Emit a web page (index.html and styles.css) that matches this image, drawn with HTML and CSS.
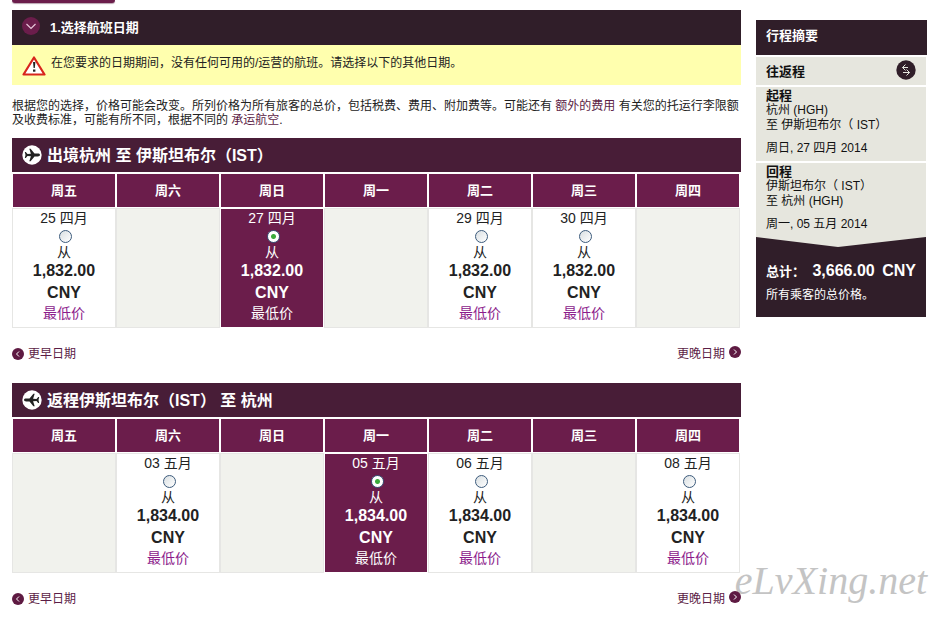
FILE: index.html
```html
<!DOCTYPE html>
<html lang="zh-CN">

<head>
  <meta charset="UTF-8">
  <meta name="viewport" content="width=device-width, initial-scale=1.0">
  <link rel="stylesheet" href="styles.css">
  <title>选择航班日期</title>
</head>

<body>
  <div class="page">
    <main class="main">
      <div class="tab"></div>
      <h1 class="step">
        <svg class="step-icon" width="18" height="18" viewBox="0 0 18 18">
          <circle cx="9" cy="9" r="9" fill="#6b1d4b" />
          <path d="M4.500 7L9 11.500L13.500 7" fill="none" stroke="#e8c6da" stroke-width="1.200" />
        </svg>
        1.选择航班日期
      </h1>
      <div class="notice">
        <svg class="notice-icon" width="24" height="20" viewBox="0 0 24 20">
          <path d="M12 1.500L22.500 18.500H1.500Z" fill="#fff" stroke="#d8251c" stroke-width="2.200" stroke-linejoin="round" />
          <path d="M11 6h2.400l-.6 6h-1.200z" fill="#222" />
          <rect x="11" y="13.500" width="2.400" height="2.200" fill="#222" />
        </svg>
        <span>在您要求的日期期间，没有任何可用的/运营的航班。请选择以下的其他日期。</span>
      </div>
      <p class="info">根据您的选择，价格可能会改变。所列价格为所有旅客的总价，包括税费、费用、附加费等。可能还有 <a href="#">额外的费用</a> 有关您的托运行李限额及收费标准，可能有所不同，根据不同的 <a href="#">承运航空</a>.</p>

      <section class="flight">
        <h2 class="route">
          <svg width="20" height="20" viewBox="0 0 20 20">
            <circle cx="10" cy="10" r="9.700" fill="#fff" />
            <path id="plane" d="M18 10c0-.9-1-1.400-2.200-1.400h-3.300L8.600 3.800H7.300l1.600 4.900-3.400.3L3.800 7H2.800L3.500 10l-.7 3h1L5.500 11l3.400.3-1.600 4.900h1.300l3.900-4.800h3.300c1.200 0 2.200-.5 2.200-1.400z" fill="#222" />
          </svg>
          出境杭州 至 伊斯坦布尔（IST）
        </h2>
        <table class="days">
          <thead>
            <tr>
              <th>周五</th>
              <th>周六</th>
              <th>周日</th>
              <th>周一</th>
              <th>周二</th>
              <th>周三</th>
              <th>周四</th>
            </tr>
          </thead>
          <tbody>
            <tr>
              <td>
                <label class="fare">
                  <span class="date">25 四月</span>
                  <input class="radio" type="radio" name="out">
                  <span class="from">从</span>
                  <span class="price">1,832.00<br>CNY</span>
                  <span class="lowest">最低价</span>
                </label>
              </td>
              <td class="empty"></td>
              <td class="selected">
                <label class="fare">
                  <span class="date">27 四月</span>
                  <input class="radio" type="radio" name="out" checked>
                  <span class="from">从</span>
                  <span class="price">1,832.00<br>CNY</span>
                  <span class="lowest">最低价</span>
                </label>
              </td>
              <td class="empty"></td>
              <td>
                <label class="fare">
                  <span class="date">29 四月</span>
                  <input class="radio" type="radio" name="out">
                  <span class="from">从</span>
                  <span class="price">1,832.00<br>CNY</span>
                  <span class="lowest">最低价</span>
                </label>
              </td>
              <td>
                <label class="fare">
                  <span class="date">30 四月</span>
                  <input class="radio" type="radio" name="out">
                  <span class="from">从</span>
                  <span class="price">1,832.00<br>CNY</span>
                  <span class="lowest">最低价</span>
                </label>
              </td>
              <td class="empty"></td>
            </tr>
          </tbody>
        </table>
        <nav class="pager">
          <a class="earlier" href="#">
            <svg width="12" height="12" viewBox="0 0 12 12">
              <circle cx="6" cy="6" r="6" fill="#5e1a42" />
              <path d="M7 3.500L4.500 6L7 8.500" fill="none" stroke="#fff" />
            </svg>
            更早日期
          </a>
          <a class="later" href="#">
            更晚日期
            <svg width="12" height="12" viewBox="0 0 12 12">
              <circle cx="6" cy="6" r="6" fill="#5e1a42" />
              <path d="M5 3.500L7.500 6L5 8.500" fill="none" stroke="#fff" />
            </svg>
          </a>
        </nav>
      </section>

      <section class="flight">
        <h2 class="route">
          <svg width="20" height="20" viewBox="0 0 20 20">
            <circle cx="10" cy="10" r="9.700" fill="#fff" />
            <use href="#plane" transform="translate(20 0) scale(-1 1)" />
          </svg>
          返程伊斯坦布尔（IST） 至 杭州
        </h2>
        <table class="days">
          <thead>
            <tr>
              <th>周五</th>
              <th>周六</th>
              <th>周日</th>
              <th>周一</th>
              <th>周二</th>
              <th>周三</th>
              <th>周四</th>
            </tr>
          </thead>
          <tbody>
            <tr>
              <td class="empty"></td>
              <td>
                <label class="fare">
                  <span class="date">03 五月</span>
                  <input class="radio" type="radio" name="return">
                  <span class="from">从</span>
                  <span class="price">1,834.00<br>CNY</span>
                  <span class="lowest">最低价</span>
                </label>
              </td>
              <td class="empty"></td>
              <td class="selected">
                <label class="fare">
                  <span class="date">05 五月</span>
                  <input class="radio" type="radio" name="return" checked>
                  <span class="from">从</span>
                  <span class="price">1,834.00<br>CNY</span>
                  <span class="lowest">最低价</span>
                </label>
              </td>
              <td>
                <label class="fare">
                  <span class="date">06 五月</span>
                  <input class="radio" type="radio" name="return">
                  <span class="from">从</span>
                  <span class="price">1,834.00<br>CNY</span>
                  <span class="lowest">最低价</span>
                </label>
              </td>
              <td class="empty"></td>
              <td>
                <label class="fare">
                  <span class="date">08 五月</span>
                  <input class="radio" type="radio" name="return">
                  <span class="from">从</span>
                  <span class="price">1,834.00<br>CNY</span>
                  <span class="lowest">最低价</span>
                </label>
              </td>
            </tr>
          </tbody>
        </table>
        <nav class="pager">
          <a class="earlier" href="#">
            <svg width="12" height="12" viewBox="0 0 12 12">
              <circle cx="6" cy="6" r="6" fill="#5e1a42" />
              <path d="M7 3.500L4.500 6L7 8.500" fill="none" stroke="#fff" />
            </svg>
            更早日期
          </a>
          <a class="later" href="#">
            更晚日期
            <svg width="12" height="12" viewBox="0 0 12 12">
              <circle cx="6" cy="6" r="6" fill="#5e1a42" />
              <path d="M5 3.500L7.500 6L5 8.500" fill="none" stroke="#fff" />
            </svg>
          </a>
        </nav>
      </section>
    </main>

    <aside class="summary">
      <h2 class="summary-title">行程摘要</h2>
      <div class="trip-type">
        往返程
        <svg width="20" height="20" viewBox="0 0 20 20">
          <circle cx="10" cy="10" r="9.700" fill="#301e29" />
          <path d="M9.500 4.500L6.500 7.500L9.500 10.500M6.500 7.500H12M10.500 9.500L13.500 12.500L10.500 15.500M13.500 12.500H7" fill="none" stroke="#e6e6de" />
        </svg>
      </div>
      <div class="leg">
        <h3>起程</h3>
        <p>杭州 (HGH)<br>至 伊斯坦布尔（ IST）</p>
        <p class="leg-date">周日, 27 四月 2014</p>
      </div>
      <div class="leg">
        <h3>回程</h3>
        <p>伊斯坦布尔（ IST）<br>至 杭州 (HGH)</p>
        <p class="leg-date">周一, 05 五月 2014</p>
      </div>
      <div class="total">
        <svg class="arrow" viewBox="0 0 170 10" preserveAspectRatio="none">
          <path d="M0 0H170L82 10Z" fill="#e6e6de" />
        </svg>
        <div class="sum">
          <span>总计：</span>
          <strong>3,666.00</strong>
          <strong>CNY</strong>
        </div>
        <p>所有乘客的总价格。</p>
      </div>
    </aside>
  </div>
  <div class="watermark">eLvXing.net</div>
</body>
</html>
```

FILE: styles.css
```css
body {
  position: relative;
  margin: 0;
  background: #fff;
  color: #222;
  font-family: "Liberation Sans", "Noto Sans CJK SC", sans-serif;
  font-size: 12px;
  line-height: 15px;
}

h1,
h2,
h3,
p {
  margin: 0;
}

a {
  color: #5c1d46;
  text-decoration: none;
}

svg {
  display: block;
  flex: none;
}

.page {
  display: grid;
  grid-template-columns: 1fr 171px;
  gap: 15px;
  align-items: start;
  padding: 0 12px;
}

.tab {
  width: 103px;
  height: 3px;
  border-radius: 0 0 4px 4px;
  background: #6b1d4b;
  box-shadow: 0 1px 1px #b9a3b0;
}

.step {
  display: flex;
  align-items: center;
  gap: 10px;
  height: 35px;
  margin-top: 7px;
  padding: 0 10px;
  background: #301e29;
  color: #fff;
  font-size: 13px;
}

.step-icon {
  margin-bottom: 3px;
}

.notice {
  display: flex;
  align-items: center;
  gap: 5px;
  height: 40px;
  padding: 0 10px;
  background: #ffffae;
}

.notice span {
  margin-bottom: 4px;
}

.notice-icon {
  margin-top: 2px;
}

.info {
  margin: 14px 0 11px;
  line-height: 14px;
}

/* 航班日期表 */
.route {
  display: flex;
  align-items: center;
  gap: 5px;
  height: 34px;
  margin-bottom: 1px;
  padding: 0 10px;
  background: #481d37;
  color: #fff;
  font-size: 16px;
}

.days {
  width: 100%;
  padding-right: 1px;
  table-layout: fixed;
  border-spacing: 0;
}

th {
  height: 33px;
  padding: 0;
  border: 1px solid #fff;
  background: #6b1d4b;
  color: #fff;
  font-size: 13px;
}

td {
  height: 118px;
  padding: 0;
  border: 1px solid #e6e6e4;
  vertical-align: top;
}

.empty {
  background: #f1f2ed;
}

.selected {
  border-color: #fff;
  background: #6b1d4b;
  color: #fff;
}

.fare {
  display: flex;
  flex-direction: column;
  align-items: center;
  font-size: 14px;
}

.date {
  line-height: 18px;
}

.from {
  line-height: 16px;
}

.price {
  font-size: 16px;
  font-weight: bold;
  line-height: 22px;
  text-align: center;
}

.lowest {
  color: #8c1c8c;
  line-height: 18px;
}

.selected .lowest {
  color: #fff;
}

.radio {
  appearance: none;
  width: 13px;
  height: 13px;
  margin: 3px 0 1px 3px;
  border: 1px solid #3c5b7c;
  border-radius: 50%;
  background: linear-gradient(135deg, #d9dfe2, #fff);
}

.radio:checked {
  background: radial-gradient(circle, #3cab3c 0 2px, #fff 3px);
}

.pager {
  display: flex;
  justify-content: space-between;
  margin: 18px 0 21px;
}

.pager a {
  display: flex;
  align-items: center;
  gap: 4px;
}

.later svg {
  margin-bottom: 4px;
}

/* 行程摘要 */
.summary {
  margin-top: 20px;
  color: #111;
}

.summary-title {
  height: 35px;
  padding: 0 10px;
  background: #301e29;
  color: #fff;
  font-size: 13px;
  line-height: 32px;
}

.trip-type,
.leg,
.total {
  margin: 2px 1px 0 0;
  padding: 0 10px;
  background: #e6e6de;
}

.trip-type {
  display: flex;
  align-items: center;
  justify-content: space-between;
  height: 28px;
  font-size: 13px;
  font-weight: bold;
}

.trip-type svg {
  margin-bottom: 3px;
}

.leg {
  padding-top: 1px;
  padding-bottom: 5px;
}

.leg h3 {
  font-size: 13px;
}

.leg-date {
  margin-top: 8px;
}

.total {
  margin-top: 0;
  padding-bottom: 14px;
  background: #301e29;
  color: #fff;
}

.arrow {
  width: calc(100% + 20px);
  height: 10px;
  margin: 0 -10px;
}

.sum {
  display: flex;
  align-items: baseline;
  justify-content: space-between;
  margin: 14px 0 6px;
  font-size: 13px;
  font-weight: bold;
  line-height: 20px;
}

.sum strong {
  font-size: 16px;
}

.watermark {
  position: absolute;
  right: 12px;
  bottom: 24px;
  z-index: -1;
  color: #c4c4c4;
  font-family: "Liberation Serif", serif;
  font-size: 40px;
  font-style: italic;
  line-height: 46px;
}
```
